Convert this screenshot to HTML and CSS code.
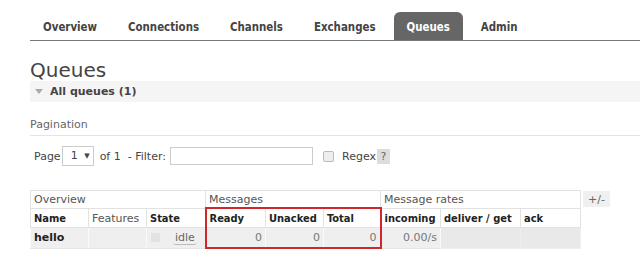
FILE: index.html
```html
<!DOCTYPE html>
<html lang="en">
<head>
    <meta charset="UTF-8">
    <title>RabbitMQ Management</title>
    <link rel="stylesheet" href="styles.css">
</head>
<body>
    <ul class="tabs">
        <li class="tab">Overview</li>
        <li class="tab">Connections</li>
        <li class="tab">Channels</li>
        <li class="tab">Exchanges</li>
        <li class="tab selected">Queues</li>
        <li class="tab">Admin</li>
    </ul>

    <div class="main">
        <h1>Queues</h1>
        <div class="section-head"><span class="arrow"></span>All queues (1)</div>

        <div class="pagination">
            <h3>Pagination</h3>
            <div class="pager">
                <span>Page</span>
                <span class="select">1 <span class="caret">&#9660;</span></span>
                <span>of 1</span>
                <span class="filter-label">- Filter:</span>
                <span class="filter"></span>
                <span class="check"></span>
                <span>Regex</span>
                <span class="help">?</span>
            </div>
        </div>

        <div class="list-wrap">
            <table class="list">
                <colgroup>
                    <col style="width:58px"><col style="width:58px"><col style="width:59px">
                    <col style="width:60px"><col style="width:58px"><col style="width:57px">
                    <col style="width:60px"><col style="width:80px"><col style="width:60px">
                </colgroup>
                <tr class="group">
                    <th colspan="3">Overview</th>
                    <th colspan="3">Messages</th>
                    <th colspan="3">Message rates</th>
                </tr>
                <tr class="heads">
                    <th>Name</th>
                    <th class="plain">Features</th>
                    <th>State</th>
                    <th class="hl-top hl-left">Ready</th>
                    <th class="hl-top">Unacked</th>
                    <th class="hl-top hl-right">Total</th>
                    <th>incoming</th>
                    <th>deliver / get</th>
                    <th>ack</th>
                </tr>
                <tr class="row">
                    <td class="name">hello</td>
                    <td></td>
                    <td class="state"><span class="state-box"></span><span class="idle">idle</span></td>
                    <td class="num hl-bottom hl-left">0</td>
                    <td class="num hl-bottom">0</td>
                    <td class="num hl-bottom hl-right">0</td>
                    <td class="num">0.00/s</td>
                    <td class="blur"></td>
                    <td class="blur"></td>
                </tr>
            </table>
            <span class="toggle">+/-</span>
        </div>
    </div>
</body>
</html>
```

FILE: styles.css
```css
body {
    margin: 0;
    background-color: #fff;
    font-family: 'DejaVu Sans', Verdana, sans-serif;
    font-size: 11px;
    color: #484848;
}

.tabs {
    display: flex;
    gap: 5px;
    list-style: none;
    margin: 12px 0 0 30px;
    padding: 0;
    border-bottom: 1px solid #777;
}

.tab {
    height: 28px;
    line-height: 31px;
    padding: 0 13px;
    font-family: 'DejaVu Sans Condensed', 'DejaVu Sans', sans-serif;
    font-stretch: condensed;
    font-weight: bold;
    font-size: 11.4px;
    color: #444;
}

.tab.selected {
    background-color: #666;
    color: #fff;
    border-radius: 6px 6px 0 0;
}

.main {
    padding-left: 30px;
}

h1 {
    margin: 0;
    padding-top: 18px;
    height: 22px;
    line-height: 22px;
    font-size: 20px;
    font-weight: normal;
    color: #444;
}

.section-head {
    display: flex;
    align-items: center;
    height: 21px;
    background-color: #f5f5f5;
    font-weight: bold;
    color: #444;
}

.arrow {
    width: 0;
    height: 0;
    margin: 0 7px 0 5px;
    border-left: 4px solid transparent;
    border-right: 4px solid transparent;
    border-top: 5px solid #aaa;
}

.pagination h3 {
    margin: 16px 0 0;
    padding-bottom: 4px;
    font-size: 11px;
    font-weight: normal;
    color: #666;
    border-bottom: 1px solid #e4e4e4;
}

.pager {
    display: flex;
    align-items: center;
    margin-top: 10px;
    padding-left: 4px;
    color: #444;
}

.select {
    width: 22px;
    height: 18px;
    line-height: 18px;
    margin: 0 6px 0 1px;
    padding-left: 8px;
    border: 1px solid #ccc;
    font-size: 11px;
}

.caret {
    font-size: 7px;
    margin-left: 3px;
    vertical-align: 1px;
}

.filter-label {
    margin-left: 7px;
    margin-right: 4px;
}

.filter {
    width: 141px;
    height: 16px;
    border: 1px solid #ccc;
}

.check {
    width: 9px;
    height: 9px;
    margin: 0 8px 0 10px;
    border: 1px solid #bbb;
    border-radius: 2px;
    background-color: #eee;
}

.help {
    width: 13px;
    height: 15px;
    line-height: 15px;
    margin-left: 1px;
    text-align: center;
    background-color: #ddd;
    color: #666;
}

.list-wrap {
    display: flex;
    align-items: flex-start;
    margin-top: 24px;
}

.list {
    width: 550px;
    table-layout: fixed;
    border-collapse: collapse;
}

.list th,
.list td {
    padding: 0 3px;
    font-size: 11px;
    white-space: nowrap;
    overflow: hidden;
    text-align: left;
    border: 1px solid #e2e2e2;
}

.group th {
    height: 16px;
    font-weight: normal;
    color: #555;
}

.heads th {
    height: 17px;
    padding-top: 1px;
    font-family: 'DejaVu Sans Condensed', 'DejaVu Sans', sans-serif;
    font-stretch: condensed;
    font-weight: bold;
    color: #222;
}

.heads th.plain {
    font-family: 'DejaVu Sans', sans-serif;
    font-stretch: normal;
    font-weight: normal;
    color: #555;
}

.row td {
    height: 19px;
    background-color: #efefef;
    border-color: #e6e6e6 #fafafa;
}

.name {
    font-weight: bold;
    color: #222;
}

.num {
    text-align: right !important;
    color: #777;
}

.state {
    color: #666;
}

.state-box {
    display: inline-block;
    width: 9px;
    height: 9px;
    margin: 0 13px 0 1px;
    vertical-align: -1px;
    background-color: #e2e2e2;
}

.idle {
    padding: 0 2px;
    border-bottom: 1px solid #bbb;
    border-radius: 3px;
}

.list .blur {
    background-color: #e9e9e9;
    border-color: #eee;
}

.list .hl-top { border-top: 2px solid #d0262c; }
.list .hl-bottom { border-bottom: 2px solid #d0262c; }
.list .hl-left { border-left: 2px solid #d0262c; }
.list .hl-right { border-right: 2px solid #d0262c; }

.toggle {
    margin: 1px 0 0 2px;
    padding: 0 5px;
    height: 16px;
    line-height: 17px;
    background-color: #f0f0f0;
    color: #666;
}
```
